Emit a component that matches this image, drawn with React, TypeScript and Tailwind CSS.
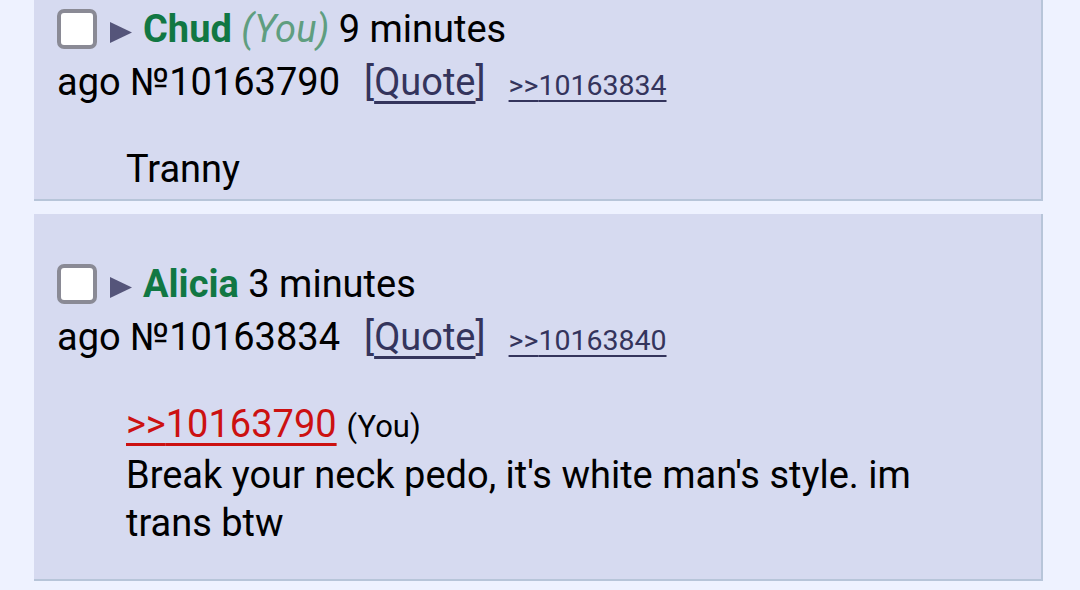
import React from "react";

type Post = {
  name: string;
  you?: boolean;
  time: string;
  no: string;
  reply: string;
  quote?: string;
  lines: string[];
};

const posts: Post[] = [
  {
    name: "Chud",
    you: true,
    time: "9 minutes",
    no: "10163790",
    reply: "10163834",
    lines: ["Tranny"],
  },
  {
    name: "Alicia",
    time: "3 minutes",
    no: "10163834",
    reply: "10163840",
    quote: "10163790",
    lines: ["Break your neck pedo, it's white man's style. im", "trans btw"],
  },
];

function PostCard({ post, first }: { post: Post; first?: boolean }) {
  return (
    <div
      className={`ml-[34px] w-[1009px] bg-[#d6daf0] border-r-2 border-b-2 border-[#b7c5d9] pl-[23px] pt-[50px] ${
        first ? "mt-[-41px] h-[242px]" : "mt-[13px] h-[367px]"
      }`}
    >
      <div className="flex items-center h-[40px]">
        <span className="w-[40px] h-[40px] rounded-[7px] border-[4px] border-[#8a8a95] bg-white shrink-0" />
        <svg width="22" height="21" viewBox="0 0 22 21" className="ml-[13px] self-start mt-[13px] shrink-0">
          <path d="M0 0 L22 10.5 L0 21 Z" fill="#55557a" />
        </svg>
        <span className="ml-[11px] text-[38px] leading-none">
          <span className="font-bold text-[#117743]">{post.name}</span>
          {post.you && <span className="italic text-[#5f9e80]"> (You)</span>}
          <span className="text-black"> {post.time}</span>
        </span>
      </div>
      <div className="flex items-baseline mt-[14px] h-[40px] text-[38px] leading-none">
        <span className="text-black">ago №{post.no}</span>
        <span className="ml-[24px] text-[#34345c]">
          [<span className="underline underline-offset-[6px]">Quote</span>]
        </span>
        <span className="ml-[23px] text-[28.5px] text-[#34345c] underline underline-offset-[5px]">
          &gt;&gt;{post.reply}
        </span>
      </div>
      <div className="ml-[69px] mt-[42px] text-[38px] leading-[48px] text-black">
        {post.quote && (
          <div className="flex items-baseline">
            <span className="text-[#cc1111] underline underline-offset-[6px]">&gt;&gt;{post.quote}</span>
            <span className="ml-[10px] text-[31px]">(You)</span>
          </div>
        )}
        {post.lines.map((l, i) => (
          <div key={i}>{l}</div>
        ))}
      </div>
    </div>
  );
}

export default function App() {
  return (
    <div className="w-[1080px] h-[590px] overflow-hidden bg-[#eef2ff] font-['Roboto',sans-serif]">
      {posts.map((p, i) => (
        <PostCard key={i} post={p} first={i === 0} />
      ))}
    </div>
  );
}
